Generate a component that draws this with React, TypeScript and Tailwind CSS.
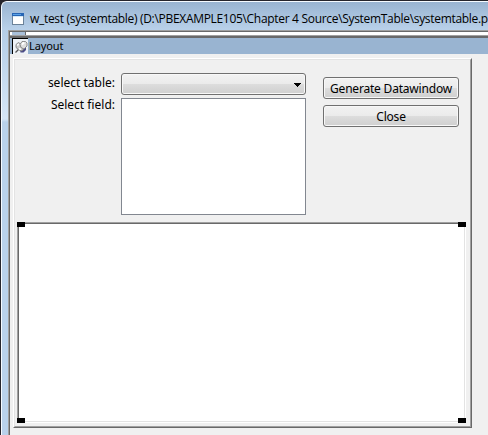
import React from 'react';

function WindowIcon() {
  return (
    <svg className="shrink-0" width="12" height="12" viewBox="0 0 12 12" shapeRendering="crispEdges">
      <rect width="12" height="12" fill="#6b8299" />
      <rect x="1" y="1" width="10" height="10" fill="#fff" />
      <rect x="0" y="0" width="12" height="3" fill="#2865b4" />
      <rect x="1" y="1" width="8" height="1" fill="#5ba3e6" />
      <rect x="1" y="3" width="10" height="1" fill="#d3e8f8" />
    </svg>
  );
}

function PushpinIcon() {
  return (
    <svg className="shrink-0" width="14" height="14" viewBox="0 0 14 14">
      <path d="M6.5 12.5h3L12 10V7l-2 2-4 1Z" fill="#4c4c86" />
      <path d="M1.5 12.5 4.5 9.5" stroke="#555" strokeWidth="1.3" />
      <path d="M2 4.5 4.5 2.5 8 5l1.5 4L8 11 5 10 2 7.5Z" fill="#c9c9c9" stroke="#777" strokeWidth=".8" />
      <path d="M6 4.5 8 1.5h3.5L13 3v3l-3 3-3-1.5Z" fill="#dedede" stroke="#777" strokeWidth=".8" />
      <path d="M3.2 5.5 4.8 4M8 4.5l2.2-2M5 8.5l2 1" stroke="#fff" strokeWidth="1.7" />
    </svg>
  );
}

function PushButton({ label }: { label: string }) {
  return (
    <button className="flex h-[22px] w-[136px] items-center justify-center rounded-[3px] border border-[#707070] bg-[linear-gradient(#f2f2f2_0%,#ebebeb_49%,#dddddd_50%,#cfcfcf_100%)] pt-[2px] text-[12px] leading-[18px] whitespace-nowrap shadow-[inset_0_0_0_1px_#f8f8f8]">
      <span className="tracking-[-0.2px]">{label}</span>
    </button>
  );
}

export default function App() {
  return (
    <div className="flex h-[435px] w-[488px] flex-col overflow-hidden bg-[#25242b] pt-px pl-px font-['Noto_Sans',sans-serif] text-[12px] text-black">
      <div className="flex min-h-0 flex-1 flex-col rounded-tl-[6px] border-t border-l border-[#f5faff] bg-[#b9d1ea]">
        <header className="flex h-[28px] shrink-0 items-center rounded-tl-[5px] bg-[linear-gradient(#99b4d1,#b9d1ea)] pt-[6px] pl-[10px]">
          <WindowIcon />
          <span className="ml-[6px] font-['Open_Sans',sans-serif] text-[12px] leading-4 tracking-[-0.31px] whitespace-nowrap">
            w_test (systemtable) (D:\PBEXAMPLE105\Chapter 4 Source\SystemTable\systemtable.p
          </span>
        </header>
        <div className="flex min-h-0 flex-1 bg-[linear-gradient(#b4cde7_0px,#d5e5f6_89px,#b9d1ea_92px)] pl-[6px]">
          <div className="flex min-w-0 flex-1 border-t border-l border-[#a0a0a0]">
            <main className="flex min-w-0 flex-1 flex-col border-t border-l border-[#696969] bg-[#f0f0f0]">
              <div className="h-[4px] shrink-0 border-b border-[#a0a0a0] bg-white pl-[2px]">
                <div className="h-[3px] w-[14px] border-r border-[#696969] bg-[#a9c0d9]" />
              </div>
              <div className="flex h-[18px] shrink-0 border-t-2 border-[#696969] bg-[#99b4d1] pl-[2px]">
                <div className="flex h-4 w-4 shrink-0 items-center justify-center border-t border-l border-black bg-[#eef2f6]">
                  <PushpinIcon />
                </div>
                <span className="ml-[1px] text-[11px] leading-[16px] tracking-[-0.1px]">Layout</span>
              </div>
              <section className="mt-[4px] ml-[3px] h-[370px] w-[459px] border border-t-white border-r-[#696969] border-b-[#696969] border-l-white">
                <div className="h-full border border-t-[#e3e3e3] border-r-[#a0a0a0] border-b-[#a0a0a0] border-l-[#e3e3e3] pl-[2px]">
                  <div className="flex h-[162px]">
                    <div className="flex w-[98px] shrink-0 flex-col items-end pt-[14px] leading-[18px]">
                      <span>select table:</span>
                      <span className="mt-[4px]">Select field:</span>
                    </div>
                    <div className="ml-[6px] flex w-[185px] flex-col pt-[13px]">
                      <div className="flex h-[22px] items-center justify-end rounded-[3px] border border-[#707070] bg-[linear-gradient(#f2f2f2_0%,#ebebeb_49%,#dddddd_50%,#cfcfcf_100%)] pt-px pr-1 shadow-[inset_0_0_0_1px_#f8f8f8]">
                        <svg width="7" height="4" viewBox="0 0 7 4" shapeRendering="crispEdges">
                          <path d="M0 0h7v1H6v1H5v1H4v1H3V3H2V2H1V1H0Z" />
                        </svg>
                      </div>
                      <div className="mt-[3px] h-[117px] border border-[#828790] bg-white" />
                    </div>
                    <div className="ml-[17px] flex flex-col gap-[6px] pt-[17px]">
                      <PushButton label="Generate Datawindow" />
                      <PushButton label="Close" />
                    </div>
                  </div>
                  <div className="relative h-[201px] w-[449px] border border-t-[#a0a0a0] border-r-white border-b-white border-l-[#a0a0a0]">
                    <div className="h-full border border-t-[#696969] border-r-[#e3e3e3] border-b-[#e3e3e3] border-l-[#696969] bg-white" />
                    <i className="absolute -top-px -left-px h-[5px] w-2 bg-black" />
                    <i className="absolute -top-px -right-px h-[5px] w-2 bg-black" />
                    <i className="absolute -bottom-px -left-px h-[5px] w-2 bg-black" />
                    <i className="absolute -right-px -bottom-px h-[5px] w-2 bg-black" />
                  </div>
                </div>
              </section>
            </main>
          </div>
        </div>
      </div>
    </div>
  );
}
